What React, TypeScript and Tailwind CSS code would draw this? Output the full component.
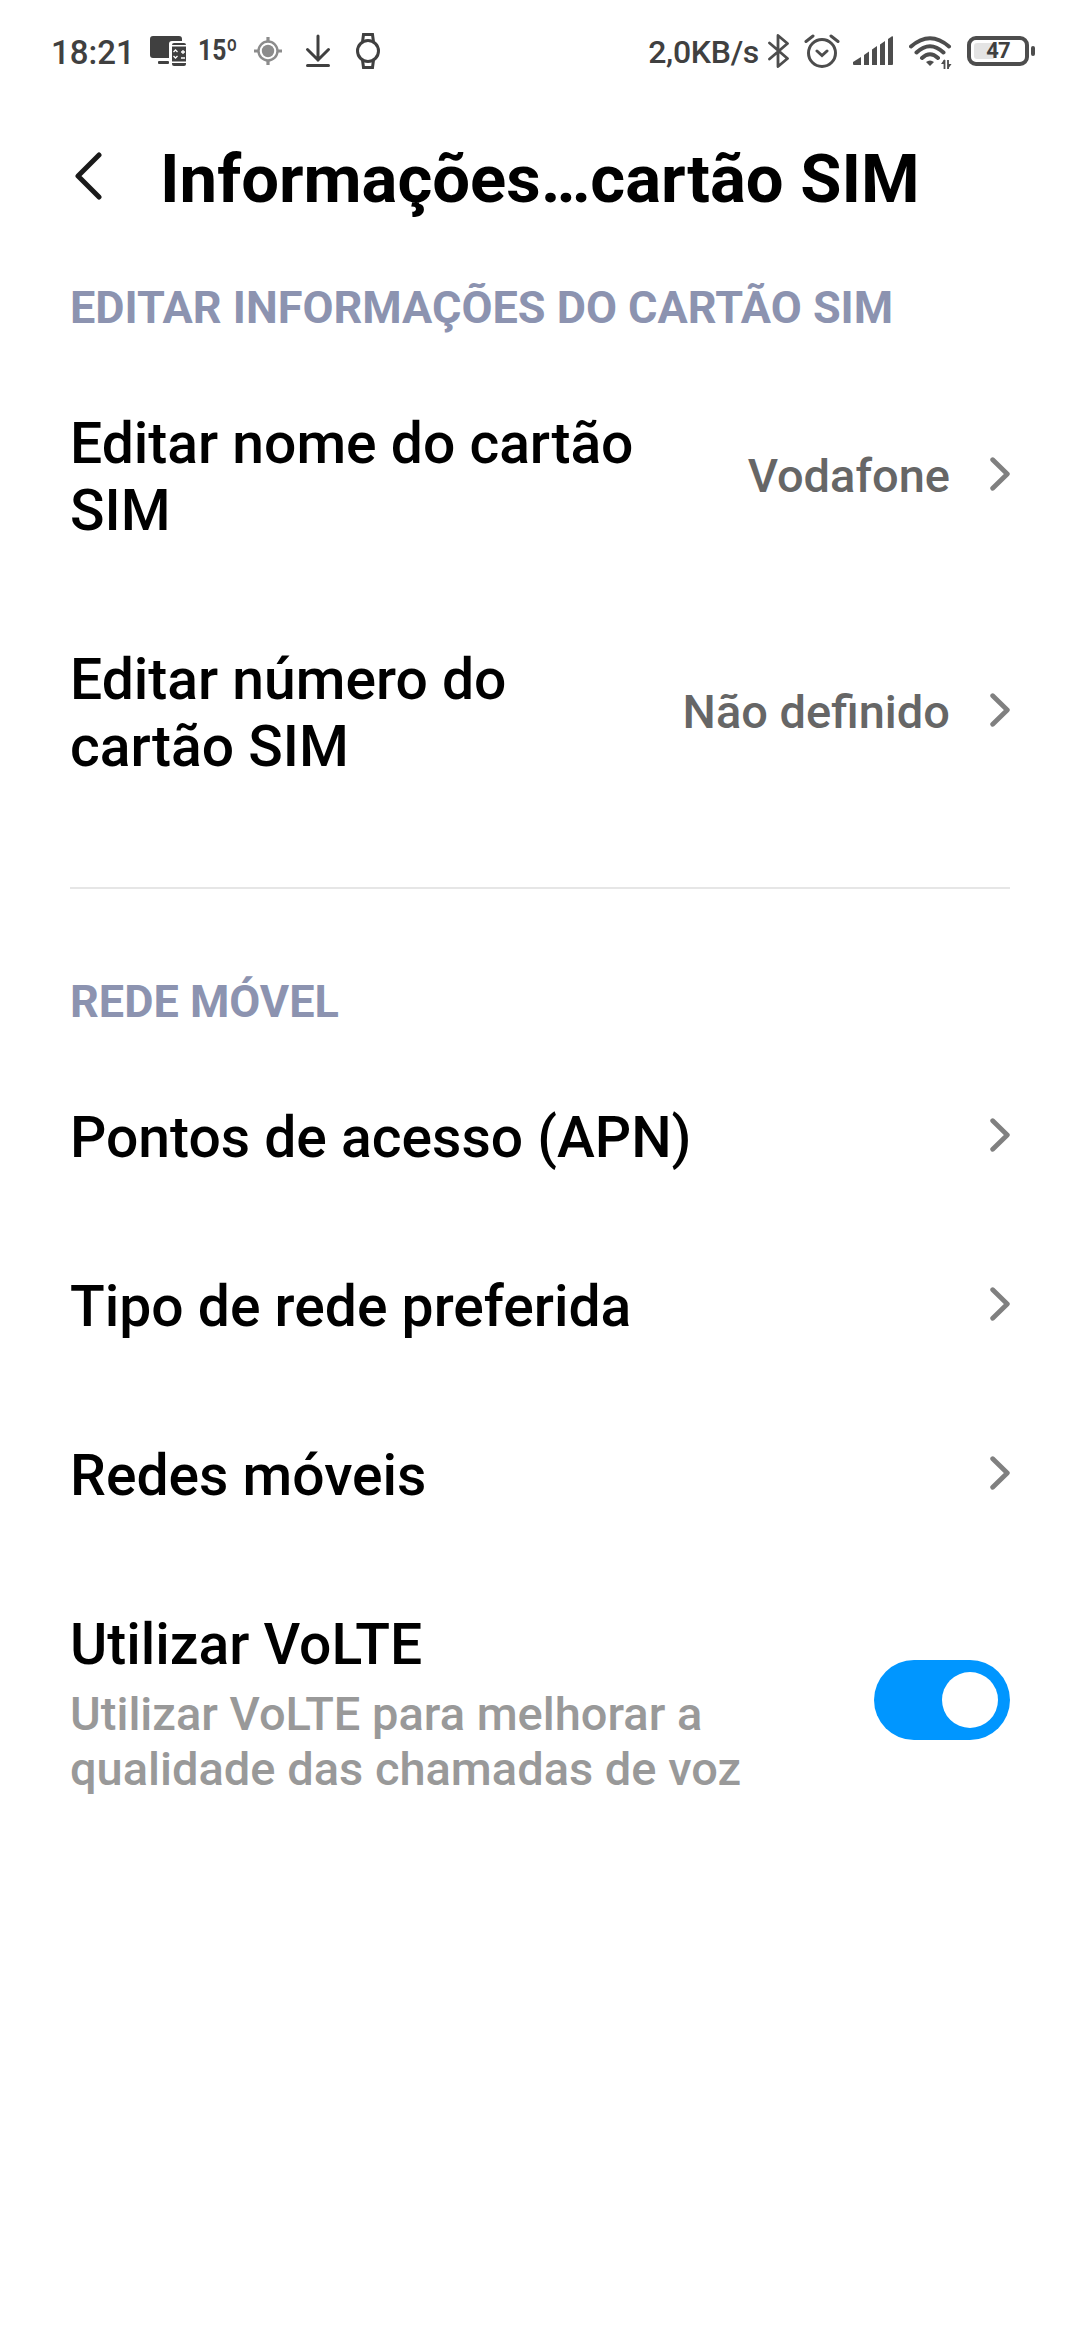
import { useState } from 'react'

interface SettingRowProps {
  title: string
  value?: string
}

function StatusBar() {
  return (
    <div className="flex h-[102px] w-full items-center pl-[51px] text-[#404040]">
      <span className="w-[99px] pt-[3px] text-[33px] font-medium leading-none">18:21</span>

      {/* Connected devices */}
      <svg width="36" height="30" viewBox="0 0 36 30" fill="currentColor">
        <path d="M3 0H29A3 3 0 0 1 32 3V5H22Q19 5 19 8V22H3A3 3 0 0 1 0 19V3A3 3 0 0 1 3 0Z" />
        <rect x="8" y="25" width="11" height="3" rx="1" />
        <path d="M24 7H34A2 2 0 0 1 36 9H22A2 2 0 0 1 24 7Z" />
        <rect x="22" y="10.500" width="14" height="15" />
        <path d="M22 27H36V28A2 2 0 0 1 34 30H24A2 2 0 0 1 22 28Z" />
        <path d="M23.500 16L25.500 14L27.500 16M23.500 20L25.500 22L27.500 20M31 16H35M33 14V18M31 22H35" fill="none" stroke="#fff" strokeWidth="1.300" />
      </svg>

      <span className="ml-[12px] w-[56px]">
        <span className="inline-block origin-left scale-x-[0.85] text-[29px] font-bold leading-none">15º</span>
      </span>

      {/* Location */}
      <svg width="28" height="28" viewBox="0 0 28 28" fill="none" stroke="#8c8c8c">
        <circle cx="14" cy="14" r="9.500" strokeWidth="2.400" />
        <circle cx="14" cy="14" r="6.200" fill="#8c8c8c" stroke="none" />
        <path d="M14 0V5M14 23V28M0 14H5M23 14H28" strokeWidth="3.200" />
      </svg>

      {/* Download */}
      <svg className="ml-[23px]" width="26" height="34" viewBox="0 0 26 34" fill="none" stroke="currentColor" strokeWidth="3" strokeLinecap="round">
        <path d="M13 2V26M2.500 15.500L13 26L23.500 15.500M2.500 31.500H23.500" />
      </svg>

      {/* Watch */}
      <svg className="ml-[25px]" width="24" height="36" viewBox="0 0 24 36" fill="none" stroke="currentColor" strokeWidth="3">
        <circle cx="12" cy="18" r="10.500" />
        <path d="M6.500 9L7.500 1.500H16.500L17.500 9M6.500 27L7.500 34.500H16.500L17.500 27" />
      </svg>

      <div className="ml-auto flex items-center pr-[45px] text-[#4d4d4d]">
        <span className="mr-[9px] pt-0.5 text-[32px] font-medium leading-none tracking-[-0.3px] text-[#404040]">2,0KB/s</span>

        {/* Bluetooth */}
        <svg width="22" height="34" viewBox="0 0 22 34" fill="none" stroke="currentColor" strokeWidth="2.800" strokeLinejoin="round" strokeLinecap="round">
          <path d="M1.500 9L19.500 24.500L10 32.500V1.500L19.500 9.500L1.500 25" />
        </svg>

        {/* Alarm */}
        <svg className="ml-[14px]" width="36" height="36" viewBox="0 0 36 36" fill="none" stroke="currentColor" strokeWidth="3" strokeLinecap="round">
          <circle cx="18" cy="20" r="13.500" />
          <path d="M13 18L18 22.500L23 18M2 8.500L9 3M34 8.500L27 3" />
        </svg>

        {/* Signal strength */}
        <svg className="ml-[13px]" width="40" height="30" viewBox="0 0 40 30" fill="currentColor">
          <path d="M1 29A1 1 0 0 1 0 28V26L8 21V29Z" />
          <path d="M11 19L16 15.500V29H11ZM19 13.500L24 10V29H19ZM27 8.500L32 5V29H27Z" />
          <path d="M35 3L39 0.300Q40 0 40 1V28Q40 29 39 29H35Z" />
        </svg>

        {/* Wi-Fi */}
        <svg className="ml-[16px] mt-[3px]" width="44" height="34" viewBox="0 0 44 34" fill="none" stroke="currentColor" strokeWidth="4" strokeLinecap="round">
          <path d="M2 10.500Q21 -6 40 10.500M7.500 16.500Q21 4 34.500 16.500M13 22Q21 14.500 29 22" />
          <path d="M17 26Q21 23 25 26L21 30Z" fill="currentColor" stroke="none" />
          <path d="M35.500 24V33M39 24V33" strokeWidth="1.800" strokeLinecap="butt" />
          <path d="M32 28L35.500 23V28ZM42.500 28L39 33V28Z" fill="currentColor" stroke="none" />
        </svg>

        {/* Battery */}
        <div className="ml-[14px] flex h-[30px] w-[62px] items-center justify-center rounded-[9px] border-4 border-[#4d4d4d]">
          <div className="flex h-4 w-[49px] items-center justify-center rounded-[3px] bg-linear-to-r from-[#e4e4e4] from-40% to-white to-40%">
            <span className="text-[22px] font-bold leading-none tracking-[-0.8px] text-[#404040]">47</span>
          </div>
        </div>
        <div className="ml-[2px] h-[10px] w-1 rounded-sm bg-[#4d4d4d]" />
      </div>
    </div>
  )
}

function ChevronRight() {
  return (
    <svg className="-mt-[6px] shrink-0" width="20" height="34" viewBox="0 0 20 34" fill="none" stroke="#808080" strokeWidth="4.800" strokeLinecap="round" strokeLinejoin="round">
      <path d="M2.700 2.700L17.300 17L2.700 31.300" />
    </svg>
  )
}

function SettingRow({ title, value }: SettingRowProps) {
  return (
    <button className="flex w-full items-center justify-between px-[70px] py-[51px] text-left">
      <span className={`text-[57px] font-medium leading-[67px] text-black ${value ? 'max-w-[600px]' : 'max-w-[860px]'}`}>{title}</span>
      <span className="flex shrink-0 items-center gap-[40px]">
        {value && <span className="-mt-0.5 text-[47px] font-medium leading-[54px] text-[#666666]">{value}</span>}
        <ChevronRight />
      </span>
    </button>
  )
}

function SectionTitle({ children }: { children: string }) {
  return <h2 className="px-[70px] text-[45px] font-bold leading-[52px] text-[#8c93b0]">{children}</h2>
}

export default function App() {
  const [volte, setVolte] = useState(true)

  return (
    <div className="min-h-[2340px] w-[1080px] bg-white font-[Roboto,sans-serif]">
      <StatusBar />

      <header className="flex h-[180px] items-start pl-[75px] pt-[38px]">
        <svg className="mt-[12px]" width="27" height="48" viewBox="0 0 27 48" fill="none" stroke="#1a1a1a" strokeWidth="5" strokeLinecap="round" strokeLinejoin="round">
          <path d="M24 3L3 24L24 45" />
        </svg>
        <h1 className="ml-[58px] text-[67px] font-bold leading-[79px] text-black">Informações…cartão SIM</h1>
      </header>

      <section className="pb-[56px]">
        <SectionTitle>EDITAR INFORMAÇÕES DO CARTÃO SIM</SectionTitle>
        <div className="pt-[25px]">
          <SettingRow title="Editar nome do cartão SIM" value="Vodafone" />
          <SettingRow title="Editar número do cartão SIM" value="Não definido" />
        </div>
      </section>

      <hr className="mx-[70px] border-t-2 border-[#e6e6e6]" />

      <section className="pt-[87px]">
        <SectionTitle>REDE MÓVEL</SectionTitle>
        <div className="pt-[25px]">
          <SettingRow title="Pontos de acesso (APN)" />
          <SettingRow title="Tipo de rede preferida" />
          <SettingRow title="Redes móveis" />
          <div className="flex items-center justify-between px-[70px] py-[51px]">
            <div className="max-w-[700px]">
              <p className="text-[57px] font-medium leading-[67px] text-black">Utilizar VoLTE</p>
              <p className="mt-2 text-[47px] font-medium leading-[55px] text-[#999999]">
                Utilizar VoLTE para melhorar a qualidade das chamadas de voz
              </p>
            </div>
            <button
              role="switch"
              aria-checked={volte}
              aria-label="Utilizar VoLTE"
              onClick={() => setVolte(!volte)}
              className={`-mt-2 flex h-20 w-[136px] items-center rounded-full px-3 ${volte ? 'justify-end bg-[#0096ff]' : 'justify-start bg-[#e0e0e0]'}`}
            >
              <span className="size-14 rounded-full bg-white" />
            </button>
          </div>
        </div>
      </section>
    </div>
  )
}
